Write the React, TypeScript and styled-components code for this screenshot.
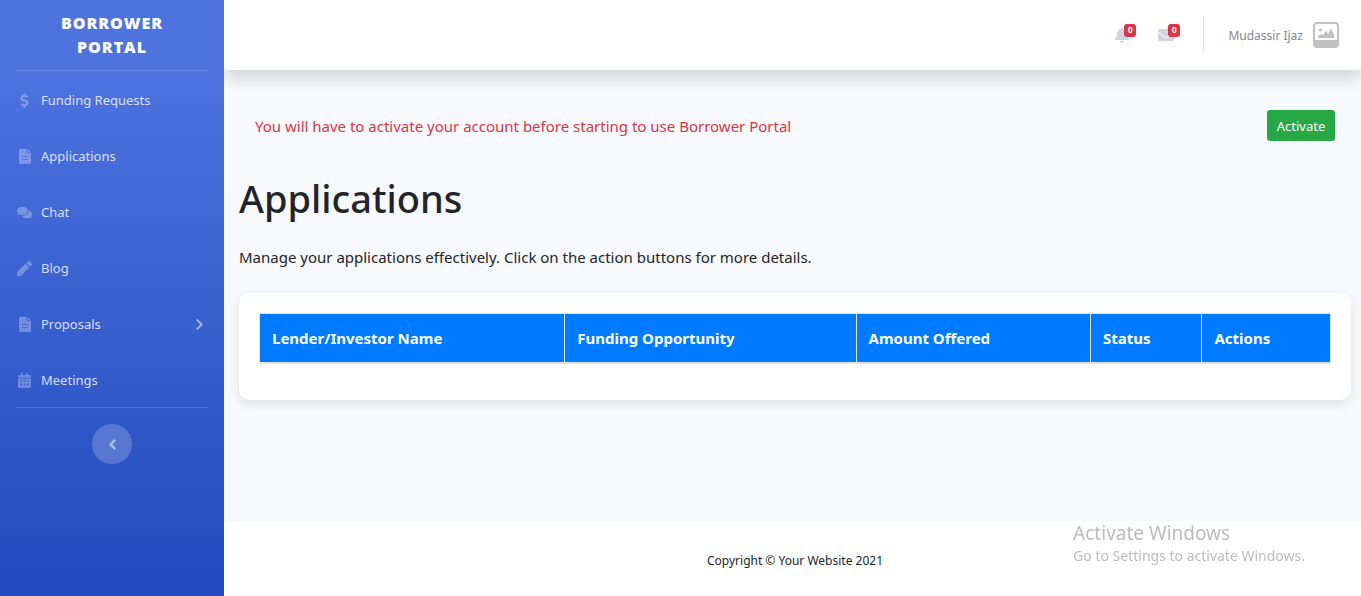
import React from "react";
import styled, { createGlobalStyle } from "styled-components";
import {
  FaAngleLeft,
  FaBell,
  FaChevronRight,
  FaComments,
  FaDollarSign,
  FaEnvelope,
  FaPen,
} from "react-icons/fa";

const GlobalStyle = createGlobalStyle`
  *, *::before, *::after { box-sizing: border-box; }
  body {
    margin: 0;
    font-family: "Noto Sans", "Open Sans", sans-serif;
    font-size: 15px;
    line-height: 24px;
    color: #212529;
    background: #fff;
  }
`;

const Page = styled.div`
  display: flex;
  min-height: 100vh;
`;

const Sidebar = styled.nav`
  position: relative;
  z-index: 1;
  flex: 0 0 224px;
  display: flex;
  flex-direction: column;
  background: linear-gradient(180deg, #4e73df 10%, #224abe 100%);
`;

const Brand = styled.a`
  display: flex;
  align-items: center;
  justify-content: center;
  height: 70px;
  padding: 0 48px;
  font-family: "Open Sans", sans-serif;
  font-size: 16px;
  font-weight: 800;
  letter-spacing: 1px;
  text-align: center;
  text-transform: uppercase;
  text-decoration: none;
  color: #fff;
`;

const SideDivider = styled.hr`
  width: calc(100% - 32px);
  margin: 0 16px;
  border: 0;
  border-top: 1px solid rgba(255, 255, 255, 0.15);
`;

const NavList = styled.ul`
  margin: 0;
  padding: 0;
  list-style: none;
`;

const NavLink = styled.a`
  display: flex;
  align-items: center;
  gap: 8px;
  height: 56px;
  padding: 2px 18px 0 16px;
  font-size: 13px;
  text-decoration: none;
  color: rgba(255, 255, 255, 0.8);
`;

const NavIcon = styled.span`
  display: flex;
  justify-content: center;
  width: 17px;
  color: rgba(255, 255, 255, 0.3);

  svg {
    flex: none;
    width: auto;
    height: 15px;
  }
`;

const NavArrow = styled.span`
  display: flex;
  margin-left: auto;
  color: rgba(255, 255, 255, 0.5);

  svg {
    width: auto;
    height: 13px;
  }
`;

const CollapseButton = styled.button`
  display: flex;
  align-items: center;
  justify-content: center;
  align-self: center;
  width: 40px;
  height: 40px;
  margin-top: 16px;
  padding: 0;
  border: 0;
  border-radius: 50%;
  color: rgba(255, 255, 255, 0.5);
  background: rgba(255, 255, 255, 0.2);

  svg {
    width: auto;
    height: 17px;
  }
`;

const Content = styled.div`
  flex: 1;
  min-width: 0;
  display: flex;
  flex-direction: column;
  background: #f8f9fc;
`;

const Topbar = styled.header`
  display: flex;
  align-items: center;
  justify-content: flex-end;
  height: 70px;
  padding-right: 22px;
  background: #fff;
  box-shadow: 0 8px 16px rgba(0, 0, 0, 0.15);
`;

const AlertButton = styled.button`
  position: relative;
  display: flex;
  align-items: center;
  justify-content: center;
  width: 44px;
  height: 70px;
  padding: 0;
  border: 0;
  color: #d1d3e2;
  background: none;

  svg {
    width: auto;
    height: 16px;
  }
`;

const Counter = styled.span`
  position: absolute;
  top: 24px;
  right: 8px;
  width: 12px;
  height: 13px;
  border-radius: 3px;
  font-size: 9px;
  font-weight: 700;
  line-height: 13px;
  text-align: center;
  color: #fff;
  background: #dc3545;
`;

const TopDivider = styled.div`
  width: 1px;
  height: 38px;
  margin: 0 24px 0 15px;
  background: #e3e6f0;
`;

const UserLink = styled.a`
  display: flex;
  align-items: center;
  gap: 10px;
  font-size: 12px;
  line-height: 18px;
  text-decoration: none;
  color: #858796;
`;

const UserName = styled.span`
  padding-top: 2px;
`;

const Main = styled.main`
  flex: 1;
  padding: 40px 10px 0 15px;
`;

const Notice = styled.div`
  display: flex;
  align-items: flex-start;
  justify-content: space-between;
  padding: 0 16px;
`;

const NoticeText = styled.p`
  margin: 4px 0 0;
  color: #dc3545;
`;

const ActivateButton = styled.button`
  min-width: 68px;
  height: 31px;
  padding: 0 8px;
  border: 0;
  border-radius: 3px;
  font-family: inherit;
  font-size: 13px;
  color: #fff;
  background: #28a745;
`;

const Title = styled.h1`
  margin: 33px 0 23px;
  font-size: 38px;
  font-weight: 500;
  line-height: 48px;
`;

const Lead = styled.p`
  margin: 0 0 24px;
`;

const Card = styled.section`
  padding: 20px 20px 36px;
  border-radius: 10px;
  background: #fff;
  box-shadow: 0 4px 12px rgba(0, 0, 0, 0.1);
`;

const Table = styled.table`
  width: 100%;
  table-layout: fixed;
  border-collapse: collapse;
  border: 1px solid #dee2e6;
`;

const HeadCell = styled.th<{ $share: number }>`
  width: ${(p) => p.$share}%;
  padding: 12px;
  border: 1px solid #dee2e6;
  border-bottom-width: 2px;
  font-weight: 700;
  text-align: left;
  color: #fff;
  background: #007bff;
`;

const Footer = styled.footer`
  display: flex;
  align-items: center;
  justify-content: center;
  height: 75px;
  padding: 4px 10px 0 15px;
  font-size: 12px;
  background: #fff;
`;

const Watermark = styled.aside`
  position: fixed;
  right: 56px;
  bottom: 30px;
  font-size: 14px;
  line-height: 20px;
  color: #bcbcbc;
  pointer-events: none;
`;

const WatermarkTitle = styled.div`
  font-size: 19px;
  line-height: 26px;
`;

const FileIcon = () => (
  <svg viewBox="0 0 12 15" fill="currentColor" aria-hidden="true">
    <path
      fillRule="evenodd"
      d="M1.4 0H7.6V3.4a.8.8 0 0 0 .8.8H12V13.6A1.4 1.4 0 0 1 10.6 15H1.4A1.4 1.4 0 0 1 0 13.6V1.4A1.4 1.4 0 0 1 1.4 0zM3.4 7.2v.9h5.2v-.9zM3.4 9.9v.9h5.2v-.9z"
    />
    <path d="M8.5 0 12 3.4H8.5z" />
  </svg>
);

const CalendarIcon = () => (
  <svg viewBox="0 0 13 15" fill="currentColor" aria-hidden="true">
    <path d="M1.4 2H3V.5a.5.5 0 0 1 .5-.5h.8a.5.5 0 0 1 .5.5V2h3.4V.5a.5.5 0 0 1 .5-.5h.8a.5.5 0 0 1 .5.5V2h1.6A1.4 1.4 0 0 1 13 3.4v1.3H0V3.4A1.4 1.4 0 0 1 1.4 2z" />
    <path
      fillRule="evenodd"
      d="M0 5.4H13V13.6A1.4 1.4 0 0 1 11.6 15H1.4A1.4 1.4 0 0 1 0 13.6zM2.2 7.3v1.5h1.6V7.3zM5.7 7.3v1.5h1.6V7.3zM9.2 7.3v1.5h1.6V7.3zM2.2 10.8v1.5h1.6v-1.5zM5.7 10.8v1.5h1.6v-1.5zM9.2 10.8v1.5h1.6v-1.5z"
    />
  </svg>
);

const Avatar = () => (
  <svg width="26" height="26" viewBox="0 0 26 26" aria-hidden="true">
    <rect x="1" y="1" width="24" height="24" rx="3" fill="#fff" stroke="#c0c0c0" strokeWidth="2" />
    <path d="M1 18h24v4a3 3 0 0 1-3 3H4a3 3 0 0 1-3-3z" fill="#c0c0c0" />
    <circle cx="7.5" cy="8" r="1.6" fill="#c0c0c0" />
    <path d="M5 16v-2l3-2 2 1 3-4 2 3 3-6 3 7v3z" fill="#c0c0c0" />
  </svg>
);

const navItems = [
  { label: "Funding Requests", icon: <FaDollarSign /> },
  { label: "Applications", icon: <FileIcon /> },
  { label: "Chat", icon: <FaComments /> },
  { label: "Blog", icon: <FaPen /> },
  { label: "Proposals", icon: <FileIcon />, expandable: true },
  { label: "Meetings", icon: <CalendarIcon /> },
];

const columns = [
  { label: "Lender/Investor Name", share: 28.5 },
  { label: "Funding Opportunity", share: 27.2 },
  { label: "Amount Offered", share: 21.9 },
  { label: "Status", share: 10.4 },
  { label: "Actions", share: 12 },
];

export default function App() {
  return (
    <>
      <GlobalStyle />
      <Page>
        <Sidebar>
          <Brand href="#">Borrower Portal</Brand>
          <SideDivider />
          <NavList>
            {navItems.map((item) => (
              <li key={item.label}>
                <NavLink href="#">
                  <NavIcon>{item.icon}</NavIcon>
                  {item.label}
                  {item.expandable && (
                    <NavArrow>
                      <FaChevronRight />
                    </NavArrow>
                  )}
                </NavLink>
              </li>
            ))}
          </NavList>
          <SideDivider />
          <CollapseButton aria-label="Collapse sidebar">
            <FaAngleLeft />
          </CollapseButton>
        </Sidebar>
        <Content>
          <Topbar>
            <AlertButton aria-label="Alerts">
              <FaBell />
              <Counter>0</Counter>
            </AlertButton>
            <AlertButton aria-label="Messages">
              <FaEnvelope />
              <Counter>0</Counter>
            </AlertButton>
            <TopDivider />
            <UserLink href="#">
              <UserName>Mudassir Ijaz</UserName>
              <Avatar />
            </UserLink>
          </Topbar>
          <Main>
            <Notice>
              <NoticeText>
                You will have to activate your account before starting to use Borrower Portal
              </NoticeText>
              <ActivateButton>Activate</ActivateButton>
            </Notice>
            <Title>Applications</Title>
            <Lead>
              Manage your applications effectively. Click on the action buttons for more details.
            </Lead>
            <Card>
              <Table>
                <thead>
                  <tr>
                    {columns.map((c) => (
                      <HeadCell key={c.label} $share={c.share} scope="col">
                        {c.label}
                      </HeadCell>
                    ))}
                  </tr>
                </thead>
              </Table>
            </Card>
          </Main>
          <Footer>Copyright © Your Website 2021</Footer>
        </Content>
      </Page>
      <Watermark>
        <WatermarkTitle>Activate Windows</WatermarkTitle>
        Go to Settings to activate Windows.
      </Watermark>
    </>
  );
}
